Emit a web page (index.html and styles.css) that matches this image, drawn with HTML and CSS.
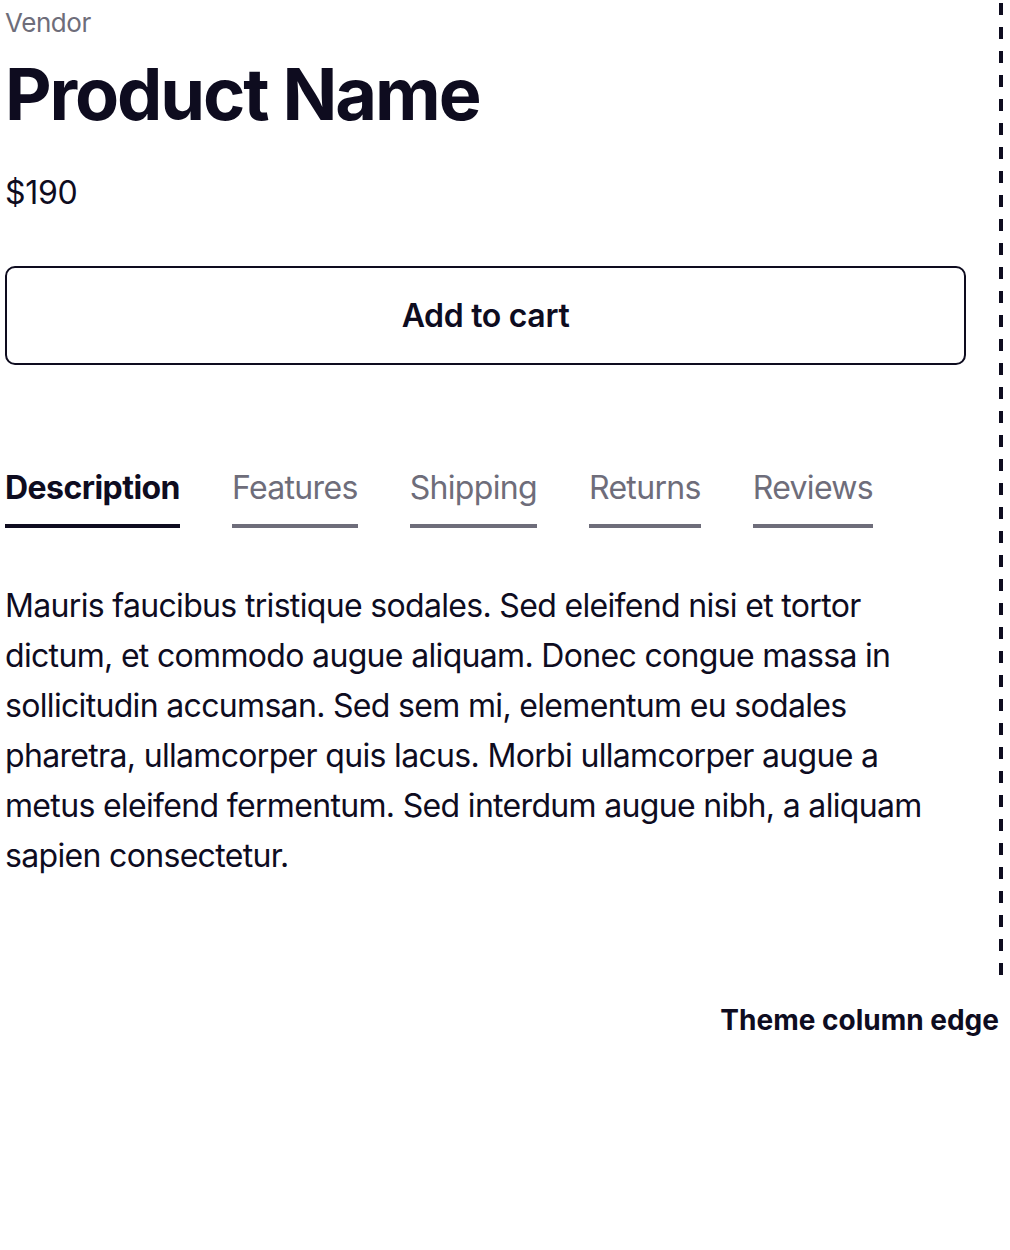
FILE: index.html
```html
<!DOCTYPE html>
<html lang="en">
<head>
  <meta charset="UTF-8">
  <meta name="viewport" content="width=device-width, initial-scale=1.0">
  <title>Product</title>
  <link rel="stylesheet" href="styles.css">
</head>
<body>
  <div class="frame">
    <div class="column">
      <p class="vendor">Vendor</p>
      <h1 class="title">Product Name</h1>
      <p class="price">$190</p>

      <button class="btn">Add to cart</button>

      <div class="tabs">
        <span class="tab active">Description</span>
        <span class="tab">Features</span>
        <span class="tab">Shipping</span>
        <span class="tab">Returns</span>
        <span class="tab">Reviews</span>
      </div>

      <p class="descripcion">
        Mauris faucibus tristique sodales. Sed eleifend nisi et tortor dictum, et commodo augue aliquam. Donec congue massa in sollicitudin accumsan. Sed sem mi, elementum eu sodales pharetra, ullamcorper quis lacus. Morbi ullamcorper augue a metus eleifend fermentum. Sed interdum augue nibh, a aliquam sapien consectetur.
      </p>
    </div>
    <p class="edge-label">Theme column edge</p>
  </div>
</body>
</html>
```

FILE: styles.css
```css
body {
  font-family: Inter, "Noto Sans", sans-serif;
  background-color: white;
  color: #0e0c1f;
  margin: 0;
  padding: 0;
}

.frame {
  width: 1003px;
}

/* columna con el borde punteado a la derecha */
.column {
  padding: 0 37px 96px 5px;
  background-image: linear-gradient(#0e0c1f 50%, transparent 50%);
  background-size: 4px 24px;
  background-position: right 0 top 3px;
  background-repeat: repeat-y;
}

.vendor {
  margin: 0;
  padding-top: 3px;
  font-size: 26px;
  line-height: 1.5;
  letter-spacing: -0.017em;
  color: #6e6d7a;
}

.title {
  margin: 9px 0 0;
  font-size: 72px;
  line-height: 1.2;
  font-weight: 700;
  letter-spacing: -2.1px;
}

.price {
  margin: 32px 0 0;
  font-size: 32px;
  line-height: 1.5;
  letter-spacing: -0.01em;
}

.btn {
  display: block;
  width: 100%;
  height: 99px;
  margin-top: 49px;
  border: 2px solid #0e0c1f;
  border-radius: 10px;
  background-color: white;
  color: #0e0c1f;
  font-family: inherit;
  font-size: 32px;
  font-weight: 600;
  letter-spacing: -0.01em;
  cursor: pointer;
}

.tabs {
  display: flex;
  gap: 52px;
  margin-top: 99px;
}

.tab {
  font-size: 32px;
  line-height: 1.5;
  letter-spacing: -0.021em;
  color: #6e6d7a;
  padding-bottom: 12px;
  border-bottom: 4px solid #6e6d7a;
}

.tab.active {
  color: #0e0c1f;
  font-weight: 700;
  letter-spacing: -0.017em;
  border-bottom-color: #0e0c1f;
}

.descripcion {
  margin: 53px 0 0;
  font-size: 32px;
  line-height: 50px;
  letter-spacing: -0.021em;
}

.edge-label {
  margin: 22px 0 0;
  padding-right: 4px;
  text-align: right;
  font-size: 28px;
  line-height: 1.5;
  font-weight: 700;
}
```
